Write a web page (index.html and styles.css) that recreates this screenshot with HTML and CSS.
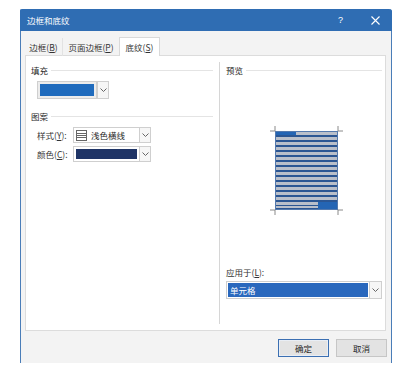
FILE: index.html
```html
<!DOCTYPE html>
<html lang="zh-CN">

<head>
  <meta charset="UTF-8">
  <meta name="viewport" content="width=device-width, initial-scale=1.0">
  <title>边框和底纹</title>
  <link rel="stylesheet" href="styles.css">
</head>

<body>
  <div class="dialog">
    <div class="titlebar">
      <span class="title">边框和底纹</span>
      <span class="help">?</span>
      <span class="close">
        <svg width="9" height="9" viewBox="0 0 9 9"><path d="M0.5 0.5L8.5 8.5M8.5 0.5L0.5 8.5" stroke="#fff" stroke-width="1.1" fill="none"/></svg>
      </span>
    </div>

    <div class="tabs">
      <div class="tab tab-border">边框(<u>B</u>)</div>
      <div class="tab tab-page">页面边框(<u>P</u>)</div>
      <div class="tab tab-shade active">底纹(<u>S</u>)</div>
    </div>

    <div class="panel">
      <div class="col-left">
        <div class="group-head"><span>填充</span><i class="rule"></i></div>
        <div class="fill-combo">
          <div class="fill-box"><div class="swatch swatch-blue"></div></div>
          <div class="arrow">
            <svg width="7" height="4" viewBox="0 0 7 4"><path d="M0.5 0.5L3.5 3.5L6.5 0.5" stroke="#666" fill="none"/></svg>
          </div>
        </div>

        <div class="group-head pattern-head"><span>图案</span><i class="rule"></i></div>
        <div class="field-row">
          <label class="field-label">样式(<u>Y</u>):</label>
          <div class="combo">
            <div class="combo-value">
              <svg class="style-icon" width="11" height="11" viewBox="0 0 11 11">
                <rect x="0.5" y="0.5" width="10" height="10" fill="#fff" stroke="#666"/>
                <path d="M1 3.5H10M1 5.5H10M1 7.5H10" stroke="#666"/>
              </svg>
              <span>浅色横线</span>
            </div>
            <div class="arrow">
              <svg width="7" height="4" viewBox="0 0 7 4"><path d="M0.5 0.5L3.5 3.5L6.5 0.5" stroke="#666" fill="none"/></svg>
            </div>
          </div>
        </div>
        <div class="field-row">
          <label class="field-label">颜色(<u>C</u>):</label>
          <div class="combo">
            <div class="combo-value"><div class="swatch swatch-navy"></div></div>
            <div class="arrow">
              <svg width="7" height="4" viewBox="0 0 7 4"><path d="M0.5 0.5L3.5 3.5L6.5 0.5" stroke="#666" fill="none"/></svg>
            </div>
          </div>
        </div>
      </div>

      <div class="col-right">
        <div class="group-head"><span>预览</span><i class="rule"></i></div>
        <svg class="preview" width="73" height="89" viewBox="0 0 73 89">
          <path d="M0 5H5V0M68 0V5H73M0 84H5V89M73 84H68V89" stroke="#8a8a8a" fill="none"/>
          <rect x="5" y="5" width="63" height="79" fill="#2b5693"/>
          <rect x="5" y="6" width="21" height="3" fill="#2465b4"/>
          <rect x="26" y="6" width="42" height="3" fill="#b9bfca"/>
          <rect x="5" y="11" width="63" height="3" fill="#b9bfca"/>
          <rect x="5" y="16" width="63" height="3" fill="#b9bfca"/>
          <rect x="5" y="21" width="63" height="3" fill="#b9bfca"/>
          <rect x="5" y="26" width="63" height="3" fill="#b9bfca"/>
          <rect x="5" y="31" width="63" height="3" fill="#b9bfca"/>
          <rect x="5" y="36" width="63" height="3" fill="#b9bfca"/>
          <rect x="5" y="41" width="63" height="3" fill="#b9bfca"/>
          <rect x="5" y="46" width="63" height="3" fill="#b9bfca"/>
          <rect x="5" y="51" width="63" height="3" fill="#b9bfca"/>
          <rect x="5" y="56" width="63" height="3" fill="#b9bfca"/>
          <rect x="5" y="61" width="63" height="3" fill="#b9bfca"/>
          <rect x="5" y="66" width="63" height="3" fill="#b9bfca"/>
          <rect x="5" y="71" width="63" height="3" fill="#b9bfca"/>
          <rect x="5" y="76" width="43" height="3" fill="#b9bfca"/>
          <rect x="48" y="76" width="20" height="7" fill="#2465b4"/>
          <rect x="5" y="80" width="43" height="2" fill="#b9bfca"/>
          <rect x="5.5" y="5.5" width="62" height="78" fill="none" stroke="#5479ad"/>
        </svg>

        <div class="apply-label">应用于(<u>L</u>):</div>
        <div class="apply-combo">
          <div class="apply-value"><span class="selected">单元格</span></div>
          <div class="arrow">
            <svg width="7" height="4" viewBox="0 0 7 4"><path d="M0.5 0.5L3.5 3.5L6.5 0.5" stroke="#666" fill="none"/></svg>
          </div>
        </div>
      </div>
    </div>

    <div class="footer">
      <button class="btn btn-ok">确定</button>
      <button class="btn">取消</button>
    </div>
  </div>
</body>

</html>
```

FILE: styles.css
```css
* {
  padding: 0;
  margin: 0;
  border: 0;
  box-sizing: border-box;
  font-family: "Noto Sans CJK SC", "Noto Sans", sans-serif;
}

body {
  background: #fff;
  color: #262626;
  font-size: 8.5px;
}

u {
  text-decoration: underline;
  text-underline-offset: 1px;
}

.dialog {
  width: 372px;
  height: 354px;
  margin: 9px 0 0 20px;
  background: #f3f3f3;
  border-left: 1px solid #4a7db8;
  border-right: 1px solid #4a7db8;
  border-radius: 2px 3px 0 0;
  box-shadow: 0 3px 0 -1px #a3b7cc;
  display: flex;
  flex-direction: column;
}

.titlebar {
  height: 22px;
  margin: 0 -1px;
  padding: 0 0 0 7px;
  background: #2f6db3;
  color: #fff;
  display: flex;
  align-items: center;
  border-radius: 2px 3px 0 0;
}

.title {
  flex: 1;
  font-size: 8.5px;
}

.help {
  width: 10px;
  margin-right: 23px;
  font-family: "Liberation Sans", sans-serif;
  font-size: 9px;
}

.close {
  width: 9px;
  height: 9px;
  margin-right: 12px;
  display: flex;
}

.tabs {
  height: 18px;
  margin: 6px 0 0 4px;
  display: flex;
  position: relative;
  z-index: 1;
}

.tab {
  height: 18px;
  display: flex;
  align-items: center;
  justify-content: center;
  color: #333;
}

.tab-border {
  width: 38px;
  border-right: 1px solid #e2e2e2;
  margin-top: 1px;
}

.tab-page {
  width: 56px;
  margin-top: 1px;
}

.tab-shade {
  width: 41px;
}

.tab.active {
  background: #fff;
  border: 1px solid #d9d9d9;
  border-bottom: 0;
  height: 19px;
  margin-top: 0;
}

.panel {
  height: 276px;
  margin: 0 5px 0 4px;
  background: #fff;
  border: 1px solid #dcdcdc;
  display: flex;
}

.col-left {
  width: 193px;
  padding: 7px 6px 0 5px;
}

.col-right {
  flex: 1;
  margin: 6px 0;
  padding: 1px 3px 0 6px;
  border-left: 1px solid #d6d6d6;
}

.group-head {
  height: 14px;
  display: flex;
  align-items: center;
}

.group-head .rule {
  flex: 1;
  height: 1px;
  margin-left: 3px;
  background: #e4e4e4;
}

.pattern-head {
  margin-top: 10px;
}

.fill-combo {
  width: 72px;
  height: 18px;
  margin: 4px 0 0 6px;
  display: flex;
}

.fill-box {
  width: 60px;
  height: 18px;
  padding: 2px;
  background: #ececec;
  border: 1px solid #cfcfcf;
}

.swatch {
  height: 100%;
}

.swatch-blue {
  background: #1f6bbd;
}

.swatch-navy {
  background: #1f3466;
}

.arrow {
  width: 12px;
  display: flex;
  align-items: center;
  justify-content: center;
  background: #f6f6f6;
  border: 1px solid #cfcfcf;
}

.field-row {
  display: flex;
  align-items: center;
  margin: 4px 0 0 6px;
}

.field-row + .field-row {
  margin-top: 3px;
}

.field-label {
  width: 36px;
  color: #333;
}

.combo {
  width: 78px;
  height: 16px;
  display: flex;
}

.combo-value {
  flex: 1;
  padding: 2px;
  display: flex;
  align-items: center;
  background: #fff;
  border: 1px solid #cfcfcf;
  border-right: 0;
}

.combo-value .swatch {
  width: 100%;
}

.style-icon {
  margin: 0 4px 0 0;
}

.preview {
  display: block;
  margin: 49px 0 0 44px;
}

.apply-label {
  height: 14px;
  line-height: 14px;
  margin-top: 50px;
  color: #333;
}

.apply-combo {
  width: 156px;
  height: 18px;
  margin-top: 2px;
  display: flex;
}

.apply-value {
  flex: 1;
  padding: 1px;
  background: #fff;
  border: 1px solid #cfcfcf;
  border-right: 0;
}

.selected {
  display: block;
  height: 14px;
  line-height: 14px;
  padding-left: 2px;
  background: #2a68bd;
  color: #fff;
}

.apply-combo .arrow {
  width: 13px;
}

.footer {
  display: flex;
  justify-content: flex-end;
  gap: 7px;
  margin: 8px 4px 0 0;
}

.btn {
  width: 51px;
  height: 18px;
  background: #e3e3e3;
  border: 1px solid #c6c6c6;
  font-size: 8.5px;
  color: #262626;
}

.btn-ok {
  border: 1px solid #3b6fb2;
  box-shadow: inset 0 0 0 1px #e9eef5;
}
```
